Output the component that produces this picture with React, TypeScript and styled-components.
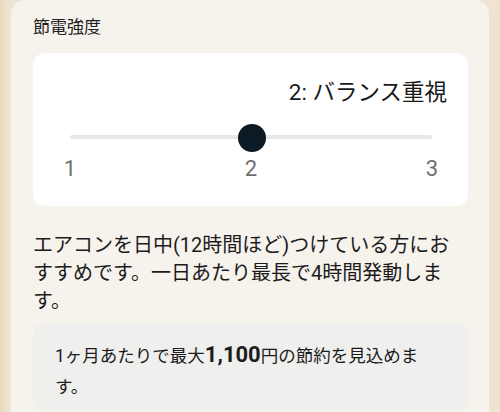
import React from "react";
import styled, { createGlobalStyle } from "styled-components";

const GlobalStyle = createGlobalStyle`
  html, body {
    margin: 0;
    padding: 0;
    background: #ecdfc9;
  }
  body {
    font-family: Roboto, "Noto Sans CJK JP", sans-serif;
    color: #1d1d1d;
  }
`;

const Page = styled.div`
  height: 412px;
  overflow: hidden;
  padding: 0 11px;
  background: linear-gradient(90deg, #e8d9bf 0%, #efe4d2 2%, #efe4d2 98%, #f0e3cf 100%);
`;

const Panel = styled.section`
  background: #f6f2ec;
  border-radius: 14px 14px 0 0;
  min-height: 412px;
  padding: 16px 21px 0 22px;
  box-sizing: border-box;
`;

const Title = styled.h2`
  margin: 0 0 15px;
  font-size: 17px;
  line-height: 22px;
  font-weight: 400;
  color: #222;
`;

const SliderCard = styled.div`
  background: #fff;
  border-radius: 12px;
  height: 153px;
  box-sizing: border-box;
  padding: 24px 21px 0 37px;
  display: flex;
  flex-direction: column;
`;

const ValueLabel = styled.div`
  text-align: right;
  font-size: 22.5px;
  line-height: 30px;
  color: #1a1a1a;
`;

const SliderArea = styled.div`
  margin: 28px 15px 0 0;
  display: flex;
  flex-direction: column;
`;

const Track = styled.div`
  position: relative;
  height: 4px;
  border-radius: 2px;
  background: #e7e7e7;
`;

const Thumb = styled.div<{ $pos: number }>`
  position: absolute;
  top: 50%;
  left: ${(p) => p.$pos}%;
  width: 28px;
  height: 28px;
  margin: -13px 0 0 -13px;
  border-radius: 50%;
  background: #0c1a25;
`;

const Ticks = styled.div`
  display: flex;
  justify-content: space-between;
  margin: 16px -12px 0;
`;

const Tick = styled.span`
  width: 24px;
  text-align: center;
  font-size: 22px;
  line-height: 28px;
  color: #707070;
`;

const Description = styled.p`
  margin: 25px 0 0;
  font-size: 20px;
  line-height: 28px;
  color: #1c1c1c;
  white-space: nowrap;
`;

const SavingBox = styled.div`
  margin-top: 8px;
  background: #efefed;
  border-radius: 12px;
  height: 88px;
  box-sizing: border-box;
  padding: 16px 20px 0 22px;
  font-size: 17.5px;
  line-height: 31px;
  color: #1c1c1c;
  white-space: nowrap;
`;

const Amount = styled.strong`
  font-size: 22px;
  font-weight: 700;
`;

export default function App() {
  const levels = [1, 2, 3];
  const current = 2;
  return (
    <>
      <GlobalStyle />
      <Page>
        <Panel>
          <Title>節電強度</Title>
          <SliderCard>
            <ValueLabel>2: バランス重視</ValueLabel>
            <SliderArea>
              <Track>
                <Thumb $pos={((current - 1) / (levels.length - 1)) * 100} />
              </Track>
              <Ticks>
                {levels.map((l) => (
                  <Tick key={l}>{l}</Tick>
                ))}
              </Ticks>
            </SliderArea>
          </SliderCard>
          <Description>
            エアコンを日中(12時間ほど)つけている方にお
            <br />
            すすめです。一日あたり最長で4時間発動しま
            <br />
            す。
          </Description>
          <SavingBox>
            1ヶ月あたりで最大<Amount>1,100</Amount>円の節約を見込めま
            <br />
            す。
          </SavingBox>
        </Panel>
      </Page>
    </>
  );
}
